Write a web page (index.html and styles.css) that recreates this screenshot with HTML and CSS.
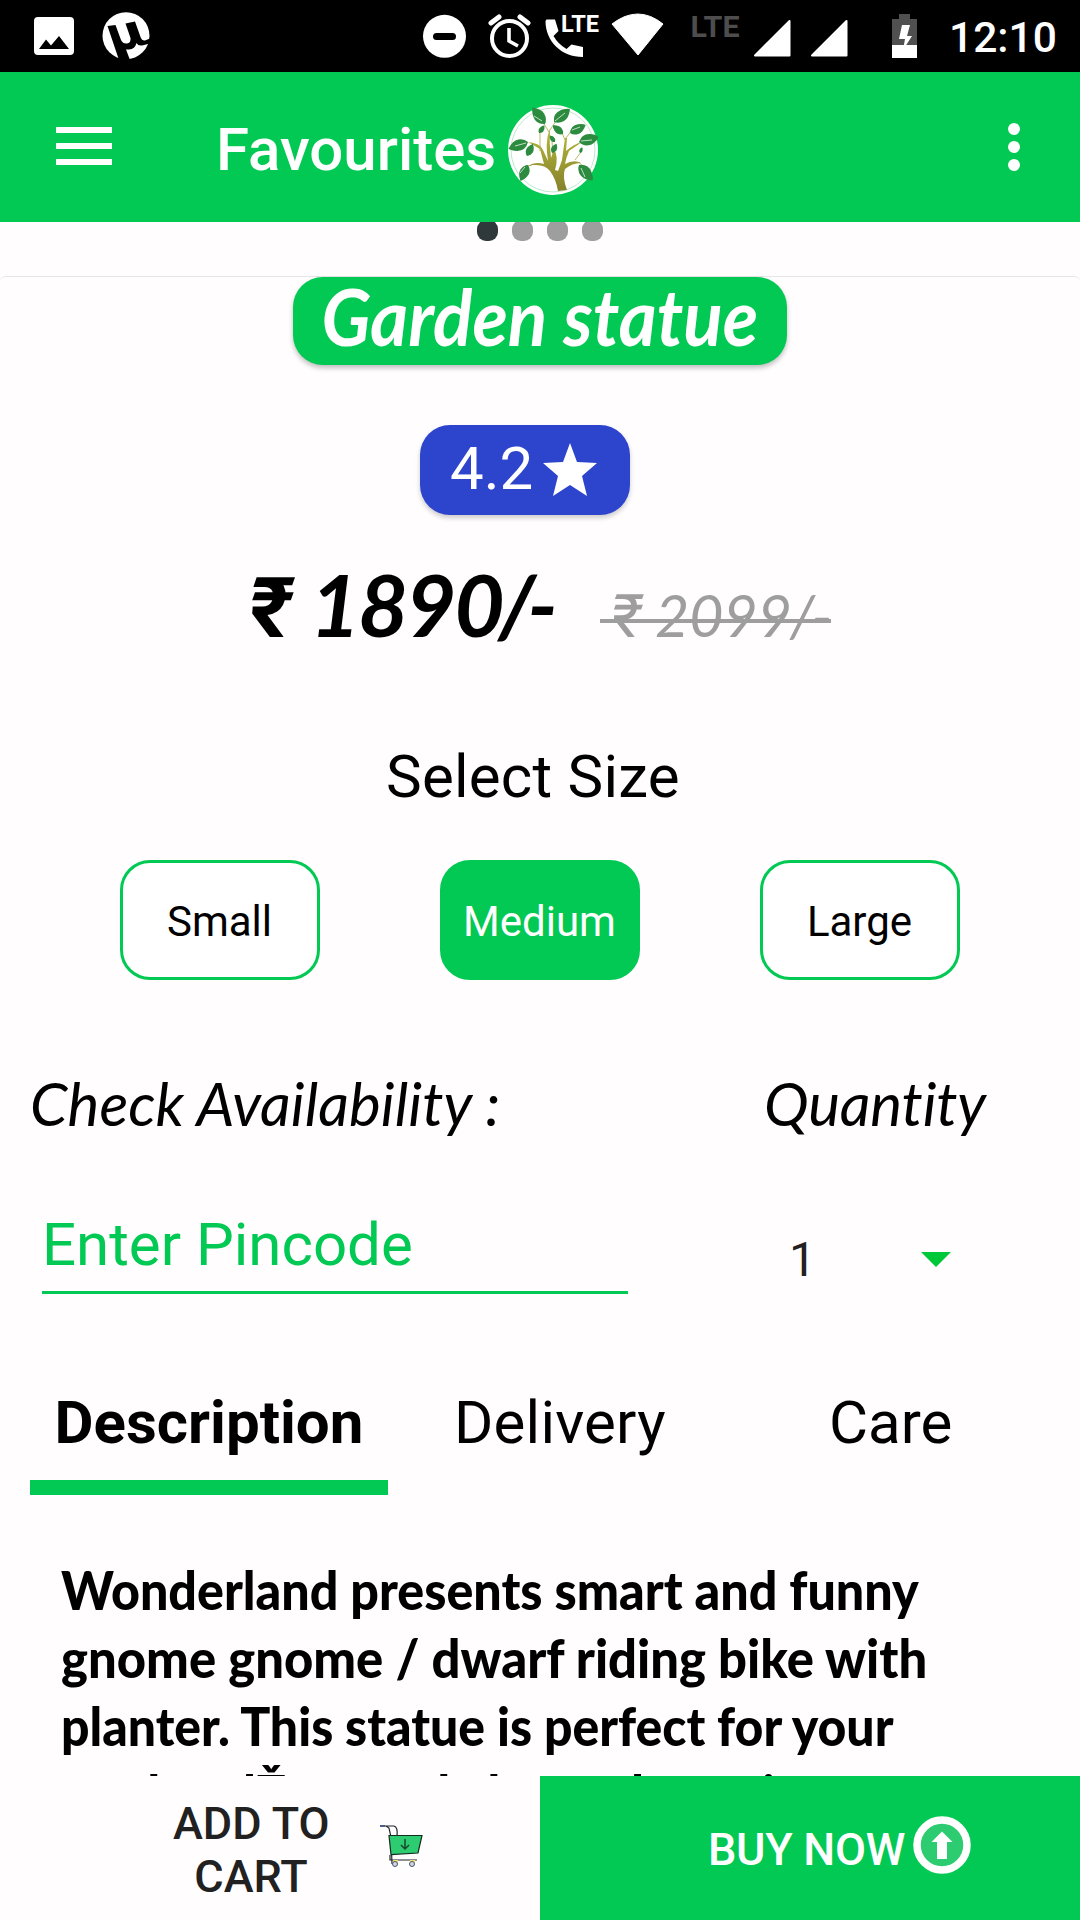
FILE: index.html
```html
<!DOCTYPE html>
<html lang="en">
<head>
<meta charset="utf-8">
<title>Favourites</title>
<link rel="stylesheet" href="styles.css">
</head>
<body>
<div class="screen">
  <header class="status">
    <svg class="status-icons" viewBox="0 0 940 72" width="940" height="72">
      <g fill="#fff">
        <path fill-rule="evenodd" d="M38 17h32a4 4 0 0 1 4 4v30a4 4 0 0 1-4 4H38a4 4 0 0 1-4-4V21a4 4 0 0 1 4-4zM39 49h30L59 36 51 45.500 46 39.500z"/>
        <circle cx="126" cy="35.700" r="23.500"/>
        <circle cx="444.500" cy="36.300" r="21.500"/>
      </g>
      <path d="M107.500 26L115.500 25 121 40Q123 44 127 43.500 131 43 130.500 38L125.500 23.500 135 21.500 140.500 37Q142 41 145 40.500L150 38.500V43.500L142 45.500Q138 46 136.500 43 135 49 129 49.500H126L130 60H119z" fill="#000"/>
      <rect x="433" y="33" width="23" height="7" rx="3.500" fill="#000"/>
      <g fill="none" stroke="#fff">
        <circle cx="509.500" cy="38.500" r="17.500" stroke-width="4"/>
        <path d="M509 28v13l9 5" stroke-width="3.600"/>
        <path d="M491 23l8-6M528 23l-8-6" stroke-width="5" stroke-linecap="round"/>
      </g>
      <path d="M546.500 19.500H555L558.500 31 553.500 36Q558 44 566.500 49L571.500 44.500 583 47V57C561 57 545.500 41 545.500 21z" fill="#fff"/>
      <path d="M612 24Q638 4 663 24L638 55z" fill="#fff" stroke="#fff" stroke-linejoin="round"/>
      <path d="M755 55.500L789.500 21v34.500zM812 55.500L846.500 21v34.500z" fill="#fff" stroke="#fff" stroke-width="2" stroke-linejoin="round"/>
      <path d="M899 14h11v5h7v26h-25V19h7z" fill="#505050"/>
      <path d="M892 45h25v13h-25z" fill="#fff"/>
      <path d="M902 25h8l-3 11h5l-9 14 2-11h-6z" fill="#fff"/>
      <text class="lte" x="561" y="32" font-size="23" textLength="38" lengthAdjust="spacingAndGlyphs" fill="#fff">LTE</text>
      <text class="lte" x="690.500" y="37" font-size="29.500" textLength="49" lengthAdjust="spacingAndGlyphs" fill="#4d4d4d">LTE</text>
    </svg>
    <span class="clock">12:10</span>
  </header>

  <nav class="appbar">
    <div class="menu"><i></i><i></i><i></i></div>
    <h1 class="appbar-title">Favourites</h1>
    <svg class="logo" viewBox="0 0 90 90" width="90" height="90">
      <defs>
        <path id="leaf" d="M0 0Q-1-9 7-12 13-14 16-13 15-4 10-1 5 2 0 0z"/>
        <linearGradient id="bark" x1="0" y1="0" x2="0" y2="1"><stop offset="0" stop-color="#b5b83a"/><stop offset="1" stop-color="#87812c"/></linearGradient>
      </defs>
      <circle cx="45" cy="45" r="45" fill="#fff"/>
      <circle cx="45" cy="45" r="42" fill="none" stroke="#a9e3bd" stroke-width=".8"/>
      <path d="M50 86Q48 74 42 66 37 59 25 60L18 62Q27 56 36 59L32 44 20 37Q32 38 35 45L40 56Q37 38 41 26L42 24Q41 38 43 53L46 44Q51 52 47 65L50 66Q52 61 54 55L57 33 59 33 58 46Q66 39 74 37L61 46Q58 53 57 59 66 54 73 58 64 58 57 64 54 72 59 85z" fill="url(#bark)"/>
      <g fill="none" stroke="#a9a840" stroke-width=".8"><path d="M32 46V28M41 27L36 19M42 25L48 16M57 35L54 28M58 33L64 25M71 57L75 62M67 55L73 47M45 49L44 37"/></g>
      <g fill="#2c8b3f">
        <use href="#leaf" transform="translate(46 17)"/>
        <use href="#leaf" transform="translate(37 19) rotate(-88)"/>
        <use href="#leaf" transform="translate(62 28) rotate(12) scale(.85)"/>
        <use href="#leaf" transform="translate(71 37) rotate(25)"/>
        <use href="#leaf" transform="translate(20 37) rotate(-160)"/>
        <use href="#leaf" transform="translate(20 60) rotate(155) scale(.85)"/>
        <use href="#leaf" transform="translate(71 60) rotate(88)"/>
        <use href="#leaf" transform="translate(55 29) rotate(-100) scale(.65)"/>
        <use href="#leaf" transform="translate(31 28) rotate(-15) scale(.45)"/>
        <use href="#leaf" transform="translate(19 51) rotate(-25) scale(.65)"/>
        <use href="#leaf" transform="translate(44 48) rotate(-25) scale(.5)"/>
        <use href="#leaf" transform="translate(47 37) rotate(-90) scale(.4)"/>
        <use href="#leaf" transform="translate(72 48) rotate(-30) scale(.3)"/>
      </g>
      <g fill="none" stroke="#fff" stroke-width=".7"><path d="M47 16L57 8M34 16L26 11M64 25L72 22M73 36L84 35M18 38L7 41M17 62L12 68M73 63L77 72"/></g>
    </svg>
    <div class="more"><i></i><i></i><i></i></div>
  </nav>

  <main class="content">
    <div class="pager"><i class="on"></i><i></i><i></i><i></i></div>
    <section class="card">
      <h2 class="name"><span>Garden statue</span></h2>
      <div class="rating"><span>4.2</span>
        <svg viewBox="0 0 56 56" width="56" height="56"><path d="M28 1L35 20 55 21 40 34 45 54 28 43 11 54 16 34 1 21 21 20z" fill="#fff"/></svg>
      </div>
      <div class="prices">
        <span class="price"><span class="rupee">₹</span><span class="amount">1890<span class="suffix">/-</span></span></span>
        <span class="was"><span class="rupee">₹</span><span class="amount">2099<span class="suffix">/-</span></span></span>
      </div>
      <h3 class="size-title">Select Size</h3>
      <div class="sizes"><div class="size">Small</div><div class="size chosen">Medium</div><div class="size">Large</div></div>
      <div class="labels"><span class="availability">Check Availability :</span><span class="quantity-label">Quantity</span></div>
      <div class="fields">
        <div class="pincode">Enter Pincode</div>
        <div class="quantity"><span>1</span><i class="caret"></i></div>
      </div>
      <div class="tabs"><div class="tab active">Description</div><div class="tab delivery">Delivery</div><div class="tab care">Care</div></div>
      <div class="description">
        <p class="l1">Wonderland presents smart and funny</p>
        <p class="l2">gnome gnome / dwarf riding bike with</p>
        <p class="l3">planter. This statue is perfect for your</p>
        <p class="l4">garden dŽcor and also make a nice</p>
      </div>
    </section>
  </main>

  <footer class="actions">
    <div class="add">
      <span>ADD TO<br>CART</span>
      <svg viewBox="0 0 44 44" width="44" height="44">
        <path d="M1 2h5l3 2 2 9 1 27M6 2h8q4 1 3 10" fill="none" stroke="#20252c" stroke-width="1.200"/>
        <path d="M0 2h5" stroke="#4a5e88" stroke-width="2"/>
        <path d="M9 11.500H42L38 29 11 30.500z" fill="#2ecc71" stroke="#142b20" stroke-width="1.200"/>
        <path d="M25 15v10M21 21l4 4 4-4" fill="none" stroke="#17482d" stroke-width="1.500"/>
        <path d="M10 31v5h27" fill="none" stroke="#20252c" stroke-width="1.200"/>
        <path d="M13 36h5v4h-5zM30 36h5v4h-5z" fill="#f1dc72"/>
        <circle cx="15" cy="40" r="2.500" fill="#ccd6e8" stroke="#4c566a"/><circle cx="32" cy="40" r="2.500" fill="#ccd6e8" stroke="#4c566a"/>
      </svg>
    </div>
    <div class="buy">
      <span>BUY NOW</span>
      <svg viewBox="0 0 58 58" width="58" height="58"><circle cx="29" cy="29" r="25" fill="#2ecc71" stroke="#fff" stroke-width="7.500"/><path d="M29 15.500L39.500 26H34V43H24V26H18.500z" fill="#fff"/></svg>
    </div>
  </footer>
</div>
</body>
</html>
```
FILE: styles.css
```css
* { box-sizing: border-box; margin: 0; padding: 0; }
body { background: #fffdfe; font-family: Roboto, sans-serif; color: #000; }
.screen { width: 1080px; height: 1920px; display: flex; flex-direction: column; overflow: hidden; }
h1, h2, h3 { font-weight: 400; }
span { white-space: nowrap; }

.status { height: 72px; flex: none; display: flex; background: #000; color: #fff; }
.status-icons { flex: none; }
.lte { font-family: Roboto, sans-serif; font-weight: 700; }
.clock { font-size: 42.500px; line-height: 75px; font-weight: 500; margin-left: 9px; }

.appbar { height: 150px; flex: none; display: flex; background: #02c953; color: #fff; }
.menu { width: 56px; margin: 55px 0 0 56px; display: flex; flex-direction: column; gap: 10px; }
.menu i { height: 6px; background: #fff; }
.appbar-title { width: 288px; margin-left: 104px; font-size: 60px; font-weight: 500; line-height: 156px; }
.logo { margin: 33px 0 0 4px; }
.more { margin: 51px 60px 0 auto; display: flex; flex-direction: column; gap: 6px; }
.more i { width: 12px; height: 12px; border-radius: 50%; background: #fff; }

.content { flex: 1; min-height: 0; overflow: hidden; }
.pager { height: 54px; overflow: hidden; display: flex; justify-content: center; gap: 14px; }
.pager i { width: 21px; height: 21px; margin-top: -2px; border-radius: 9px; background: #9e9e9e; }
.pager .on { background: #2f383b; }
.card { display: flex; flex-direction: column; border-top: 1px solid #e7e6e7; border-radius: 6px 6px 0 0; }

.name { width: 494px; height: 88px; align-self: center; border-radius: 30px; background: #02c953; color: #fff; box-shadow: 0 3px 5px rgba(0,0,0,.25); font: italic 700 79px/77px Lato, sans-serif; display: flex; justify-content: center; }
.name span { transform: scaleX(.922); }
.rating { width: 210px; height: 90px; margin: 60px 0 0 420px; padding-left: 30px; border-radius: 30px; background: #2d44cc; color: #fff; box-shadow: 0 3px 5px rgba(0,0,0,.2); display: flex; font-size: 60px; line-height: 87px; }
.rating svg { margin: 17px 0 0 9px; }
.prices { height: 90px; margin-top: 44px; padding-left: 246px; display: flex; align-items: baseline; line-height: 90px; }
.price, .was { display: flex; align-items: baseline; }
.amount { font-family: Lato, sans-serif; font-style: italic; }
.rupee { transform: skewX(-5deg); transform-origin: 0 70%; }
.price { width: 354px; font-size: 87px; font-weight: 700; }
.price .rupee { width: 64px; padding-left: 2px; font-size: 84px; }
.price .amount { letter-spacing: -2.400px; }
.price .suffix { margin-left: -4px; letter-spacing: -8px; }
.was { width: 231px; padding-left: 9px; font-size: 59px; font-weight: 400; color: #9e9e9e; line-height: 60px; background: linear-gradient(#9e9e9e, #9e9e9e) 0 34px / 100% 4px no-repeat; }
.was .rupee { width: 46px; padding-left: 2px; font-size: 60px; }
.was .amount { letter-spacing: 0; }
.was .suffix { margin-left: -2px; letter-spacing: -3px; }
.size-title { margin: 98px 0 0 386px; font-size: 60px; line-height: 60px; letter-spacing: .25px; }
.sizes { margin: 53px 120px 0; display: flex; justify-content: space-between; }
.size { width: 200px; height: 120px; padding-right: 1px; border: 3px solid #02c953; border-radius: 30px; background: #fff; font-size: 42px; line-height: 117px; text-align: center; }
.chosen { background: #02c953; color: #fff; }
.labels { height: 72px; margin-top: 87px; padding-left: 30px; display: flex; font: italic 400 60px/72px Lato, sans-serif; }
.availability { width: 734px; letter-spacing: .1px; }
.quantity-label { letter-spacing: -.2px; }
.fields { height: 84px; margin-top: 71px; padding-left: 42px; display: flex; }
.pincode { width: 586px; height: 84px; border-bottom: 3px solid #02c953; color: #02c953; font-size: 60px; line-height: 70px; }
.quantity { margin: 20px 0 0 161px; width: 162px; display: flex; justify-content: space-between; font-size: 48px; line-height: 60px; color: #212121; }
.caret { width: 30px; height: 15px; margin-top: 22px; background: #00c838; clip-path: polygon(0 0, 100% 0, 50% 100%); }
.tabs { margin: 99px 0 0 30px; display: flex; font-size: 60px; line-height: 60px; }
.active { width: 358px; height: 102px; border-bottom: 15px solid #02c953; text-align: center; font-weight: 700; }
.delivery { margin-left: 66px; width: 375px; letter-spacing: .2px; }
.description { margin: 61px 0 0 61px; font: 900 53px/68px Lato, sans-serif; }
.description p { white-space: nowrap; width: max-content; transform-origin: 0 50%; }
.l1 { transform: scaleX(.947); }
.l2 { transform: scaleX(.958); }
.l3 { transform: scaleX(.942); }
.l4 { transform: scaleX(.945); }

.actions { height: 144px; flex: none; display: flex; font-size: 45px; font-weight: 500; line-height: 53px; }
.add { width: 540px; padding-left: 173px; display: flex; color: #212121; text-align: center; }
.add span { width: 156px; padding-top: 21px; }
.add svg { margin: 48px 0 0 51px; }
.buy { width: 540px; padding-left: 168px; display: flex; background: #02c953; color: #fff; }
.buy span { width: 197px; padding-top: 47px; letter-spacing: -.3px; }
.buy svg { margin: 40px 0 0 8px; }
```
